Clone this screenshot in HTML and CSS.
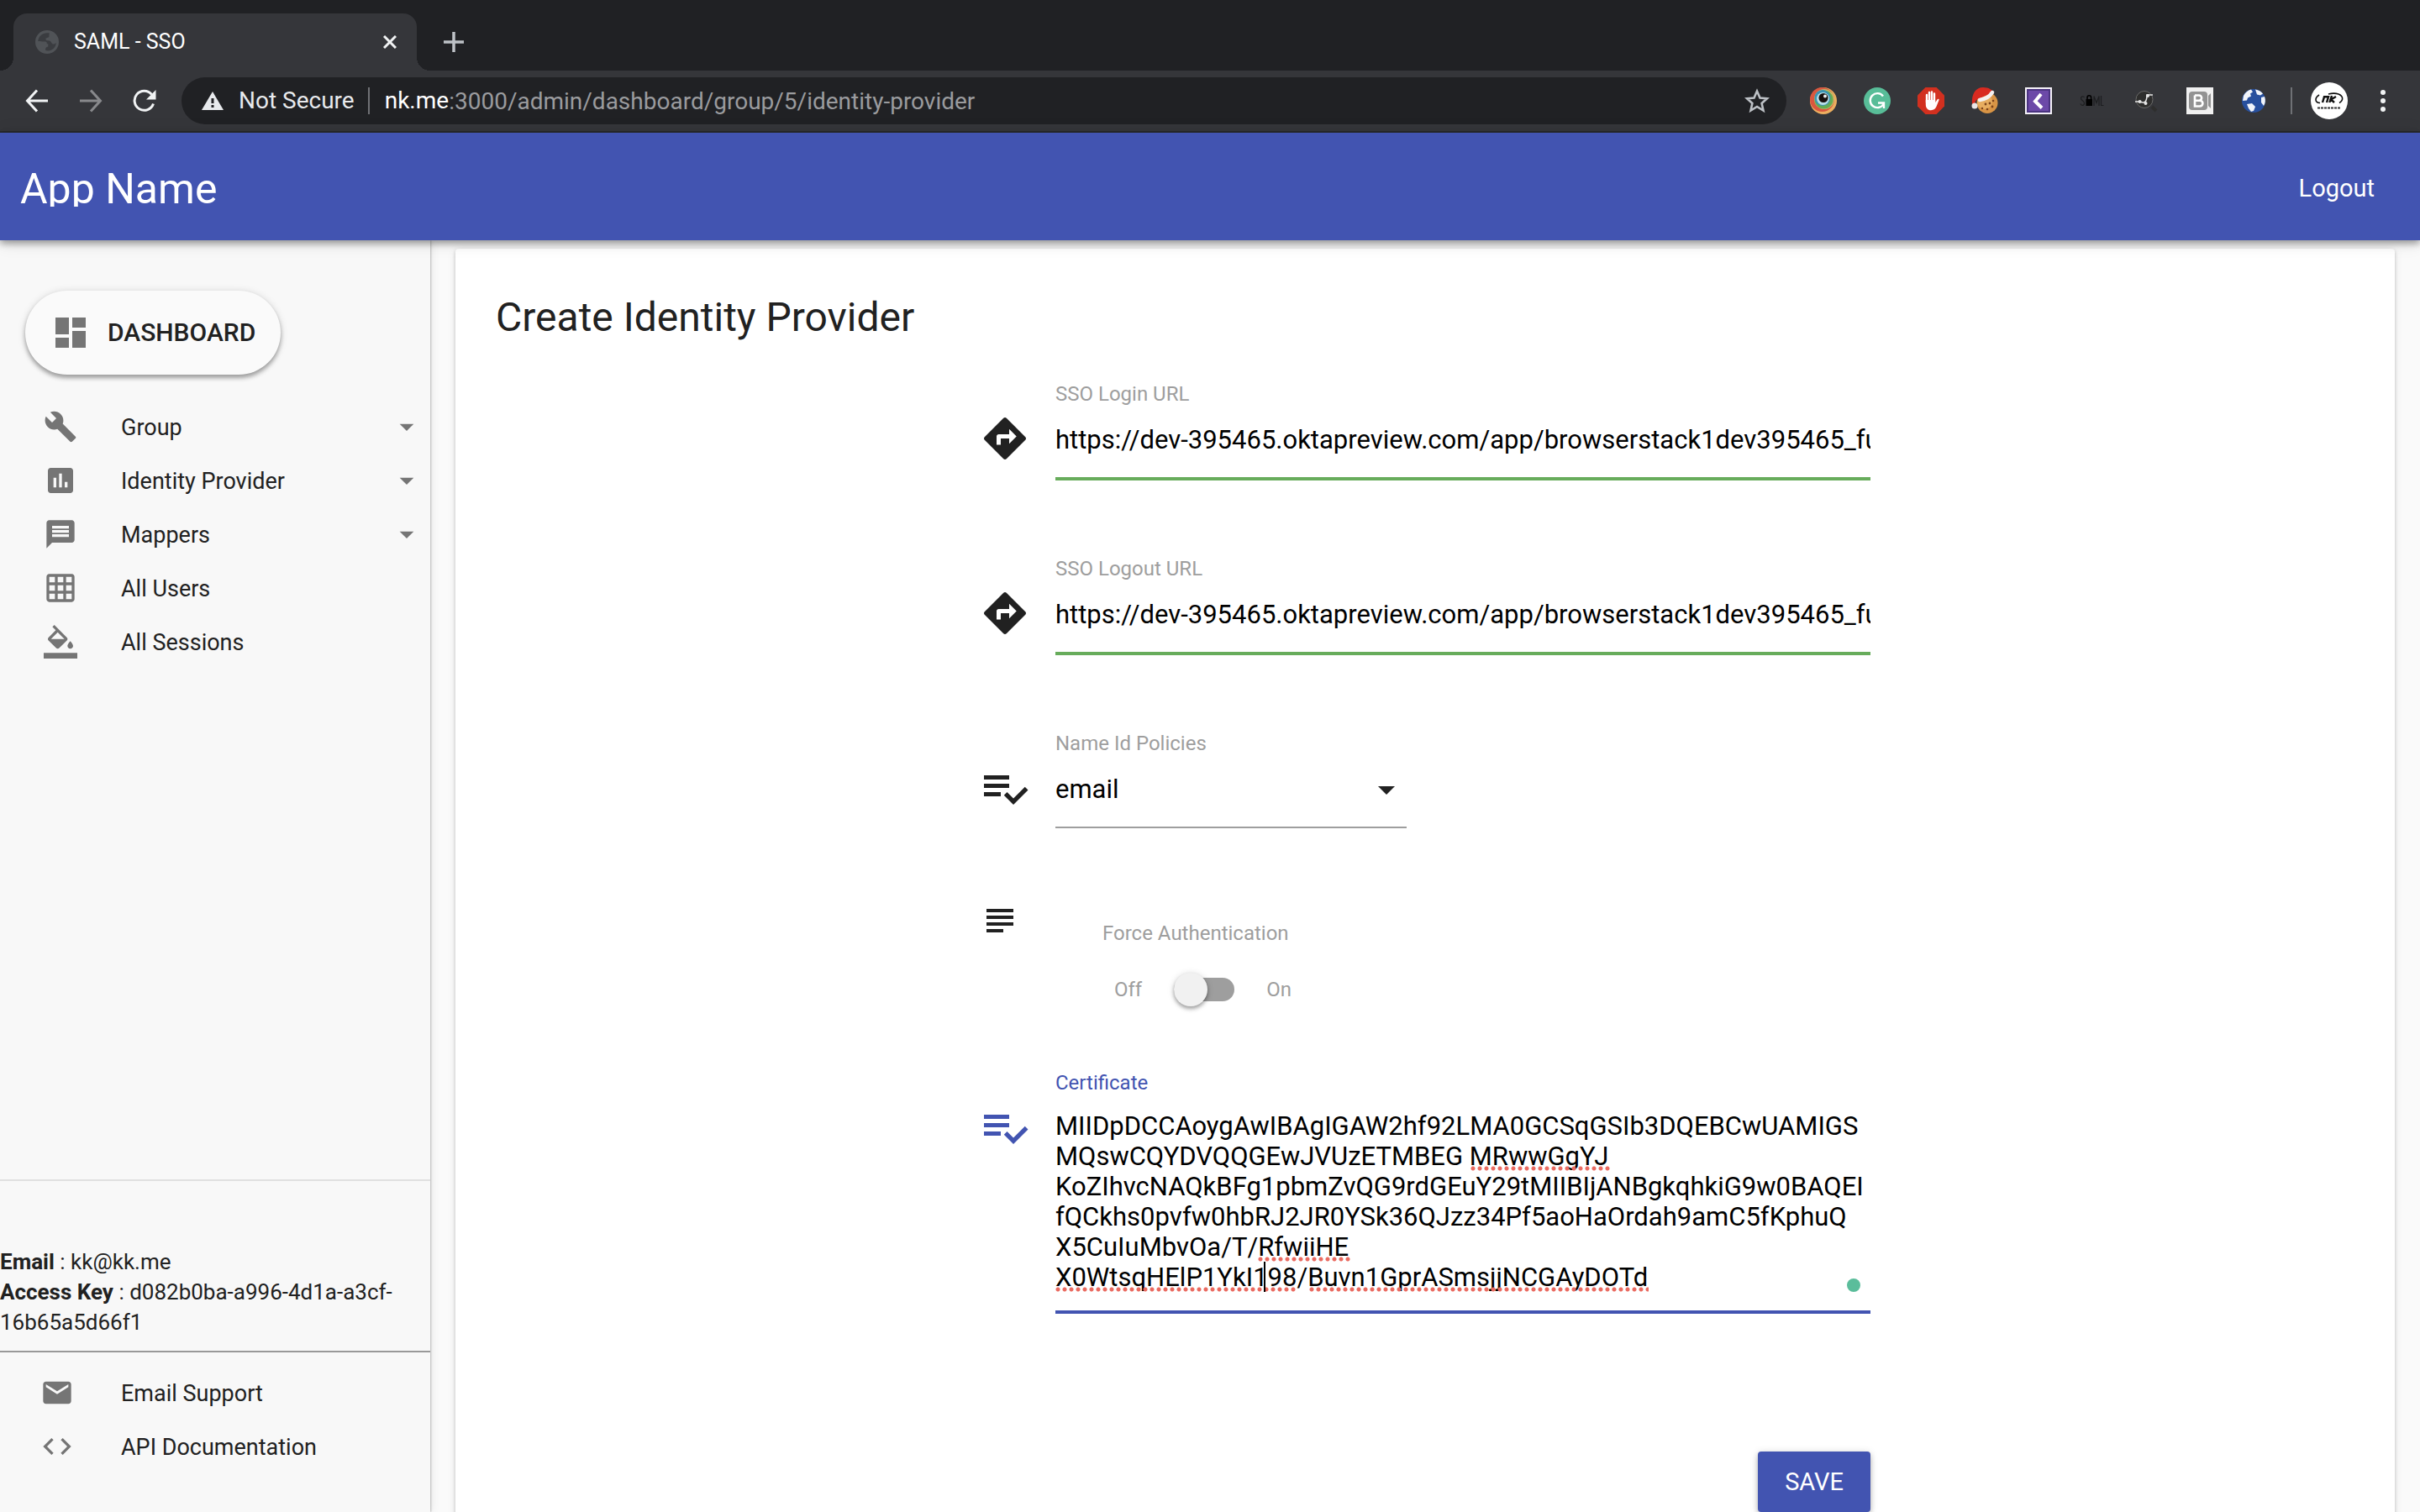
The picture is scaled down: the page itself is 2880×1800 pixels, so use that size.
FILE: index.html
```html
<!DOCTYPE html>
<html lang="en">
<head>
<meta charset="utf-8">
<meta name="viewport" content="width=device-width, initial-scale=1">
<title>SAML - SSO</title>
<link rel="stylesheet" href="styles.css">
</head>
<body>

<div class="chrome">
  <div class="tab-strip">
    <div class="tab">
      <svg class="favicon" viewBox="0 0 28 28" aria-hidden="true">
        <circle cx="14" cy="14" r="14" fill="#505357"/>
        <path d="M17 3.500C10 2 4 6 3.200 13c2 .6 5 .2 8.600.5 2 .2 2 1.500 2 2.800h1.500v3.200c-2 .6-3.600 1.400-3 4.500 5 1.500 9.500-1 11.700-5.500.4-1 .7-2.200.8-3.500-1.300 1.300-2.600 1.800-4 1.400-1.800-.6-1.800-3.400-3.800-3.900-2-.4-4.500.1-4.600-2-.1-2 3.400-1 4-2.700.3-1-.4-3 .6-4.300z" fill="#3a3c40"/>
      </svg>
      <span class="tab-title">SAML - SSO</span>
      <button class="bare tab-close" type="button" aria-label="Close tab">
        <svg width="16" height="16" viewBox="0 0 16 16"><path d="M1 1l14 14M15 1L1 15" stroke="#f1f3f4" stroke-width="3"/></svg>
      </button>
    </div>
    <button class="bare tab-new" type="button" aria-label="New tab">
      <svg width="24" height="24" viewBox="0 0 24 24"><path d="M12 0v24M0 12h24" stroke="#bdc1c6" stroke-width="3.500"/></svg>
    </button>
  </div>

  <div class="toolbar">
    <button class="bare tool" type="button" aria-label="Back">
      <svg width="28" height="28" viewBox="0 0 28 28"><path d="M14 1.500L2.500 14 14 26.500M2.500 14H27" fill="none" stroke="#f1f3f4" stroke-width="3"/></svg>
    </button>
    <button class="bare tool" type="button" aria-label="Forward">
      <svg width="28" height="28" viewBox="0 0 28 28"><path d="M14 1.500L25.500 14 14 26.500M25.500 14H1" fill="none" stroke="#88898c" stroke-width="3"/></svg>
    </button>
    <button class="bare tool" type="button" aria-label="Reload">
      <svg width="28" height="28" viewBox="0 0 28 28"><path d="M24.500 17.500A11.500 11.500 0 1 1 22.500 6.500" fill="none" stroke="#f1f3f4" stroke-width="3"/><path d="M27.500 1v11.500H16z" fill="#f1f3f4"/></svg>
    </button>

    <div class="omnibox">
      <svg width="26" height="22" viewBox="0 0 26 22" aria-hidden="true"><path d="M13 0l13 22H0z" fill="#e8eaed"/><path d="M13 8v6M13 16v3" stroke="#202124" stroke-width="3"/></svg>
      <span class="security">Not Secure</span>
      <span class="omnibox-rule"></span>
      <span class="host">nk.me</span>
      <input class="address" type="text" aria-label="Address" value=":3000/admin/dashboard/group/5/identity-provider">
      <button class="bare star" type="button" aria-label="Bookmark">
        <svg width="30" height="30" viewBox="0 0 30 30"><path d="M15 3.500l3.500 8 8.500.8-6.400 5.700 1.900 8.500L15 22l-7.500 4.500 1.900-8.500L3 12.300l8.500-.8z" fill="none" stroke="#bdc1c6" stroke-width="2.600"/></svg>
      </button>
    </div>

    <button class="bare tool" type="button" aria-label="Viewer">
      <svg width="32" height="32" viewBox="0 0 32 32"><circle cx="16" cy="16" r="16" fill="#ecae5f"/><circle cx="14.500" cy="14.500" r="14.500" fill="#d9573f"/><circle cx="17" cy="14" r="12" fill="#c9b565"/><circle cx="16.500" cy="14.500" r="11" fill="#64ab54"/><circle cx="15" cy="12.500" r="9.500" fill="#3a93b4"/><circle cx="15.500" cy="13.500" r="7.500" fill="#b8dde6"/><circle cx="16" cy="12.500" r="5.500" fill="#160f0e"/><circle cx="18" cy="10.500" r="2" fill="#eee"/></svg>
    </button>
    <button class="bare tool" type="button" aria-label="Grammar">
      <svg width="32" height="32" viewBox="0 0 32 32"><circle cx="16" cy="16" r="16" fill="#58bd98"/><path d="M23 10.500A8.500 8.500 0 1 0 23.500 20M17 18.500h7V25" fill="none" stroke="#fff" stroke-width="2.400"/></svg>
    </button>
    <button class="bare tool" type="button" aria-label="Blocker">
      <svg width="32" height="32" viewBox="0 0 32 32"><path d="M9.400 0h13.200L32 9.400v13.200L22.600 32H9.400L0 22.600V9.400z" fill="#d2301f"/><path d="M11 18V9M14 17V6M17 17V5.500M20 18V7.500" stroke="#fff" stroke-width="2.400" stroke-linecap="round"/><path d="M9.800 15h11.400v3l2.300-3.500c1-1.300 2.500-.5 2 .8l-3 7.500c-1 2.800-3.200 4.400-6.500 4.400-4 0-6.200-2.700-6.200-7z" fill="#fff"/></svg>
    </button>
    <button class="bare tool" type="button" aria-label="Cookies">
      <svg width="32" height="32" viewBox="0 0 32 32"><circle cx="19" cy="18.500" r="12.500" fill="#d89445"/><circle cx="16" cy="17" r="9" fill="#e7ad60"/><g fill="#7c431b"><circle cx="17" cy="20" r="1.400"/><circle cx="22" cy="19" r="1.400"/><circle cx="26" cy="16" r="1.300"/><circle cx="19" cy="26" r="1.300"/><circle cx="25" cy="23" r="1.400"/><circle cx="13" cy="25" r="1.200"/></g><path d="M1 20C0 8 5 0 14 0c7 0 11 3 12 6L8 14c-3 1-4 4-4 7z" fill="#d92a20"/><path d="M10 15c6-1 12-4 15-9" fill="none" stroke="#f4f1f0" stroke-width="4.500" stroke-linecap="round"/><circle cx="4" cy="22" r="3.500" fill="#e9e7e7"/></svg>
    </button>
    <button class="bare tool" type="button" aria-label="Previous">
      <svg width="32" height="32" viewBox="0 0 32 32"><path d="M0 0h32v32H0z" fill="#f4f1f8"/><path d="M2 2h28v28H2z" fill="#4a3380"/><path d="M4 4h24v24H4z" fill="#6c49a8"/><path d="M19 8l-7 8.500 8 8" fill="none" stroke="#fff" stroke-width="4"/></svg>
    </button>
    <button class="bare tool" type="button" aria-label="SAML tracer">
      <svg width="32" height="32" viewBox="0 0 32 32"><g fill="none" stroke="#1d1e20" stroke-width="1.200"><path d="M6.500 12c-1-2-4-1.500-4 1 0 3 4 2.500 4 6 0 3-4 3-4.500.5M18 22V10.500l3 8 3-8V22M26.500 10v11.500h3"/></g><path d="M8.500 14h7.500v8H8.500z" fill="#000"/><path d="M10 14v-2a2.300 2.300 0 0 1 4.600 0v2" fill="none" stroke="#000" stroke-width="1.600"/></svg>
    </button>
    <button class="bare tool" type="button" aria-label="Signal">
      <svg width="32" height="32" viewBox="0 0 32 32"><circle cx="14" cy="14.500" r="10" fill="#2e2e2d" stroke="#6a6a69" stroke-width="1"/><path d="M23 23l5 5" stroke="#2e2e2d" stroke-width="4"/><path d="M3 17h6q8 4 8-8h7" fill="none" stroke="#e4e4e4" stroke-width="1.600"/><g fill="#e4e4e4"><circle cx="8.500" cy="17" r="2"/><circle cx="15.500" cy="19" r="2"/><circle cx="18" cy="10" r="2"/></g></svg>
    </button>
    <button class="bare tool" type="button" aria-label="Recorder">
      <svg width="32" height="32" viewBox="0 0 32 32"><path d="M0 0h32v32H0z" fill="#f0f0f0"/><rect x="3" y="5" width="22" height="22" rx="4" fill="#929292"/><path d="M26 10l3-3v18l-3-3z" fill="#929292"/><path d="M10 9.500v13h6a3.400 3.400 0 0 0 0-6.800h-6M15 15.700a3.100 3.100 0 0 0 0-6.200h-5" fill="none" stroke="#fff" stroke-width="2.600"/></svg>
    </button>
    <button class="bare tool" type="button" aria-label="Globe">
      <svg width="32" height="32" viewBox="0 0 32 32"><circle cx="16" cy="16" r="14" fill="#28509e"/><path d="M4 10c2-4 5-6.500 9-7.500l2 3-3 2 1 3-4 2-1 3-5 .5zM18 2.500c4 .5 7 2.500 9 5l-3 2-4-1zM25 12l4-1c1.500 4 1 8-1 11l-3-4zM8 20l6-1 4 4-2 5-3 1-3-4z" fill="#f2f5fa"/></svg>
    </button>
    <span class="toolbar-rule"></span>
    <button class="bare avatar" type="button" aria-label="Profile">
      <svg width="44" height="44" viewBox="0 0 44 44"><circle cx="22" cy="22" r="22" fill="#fff"/><path d="M10 15c-5 3-6 9 1 9.500M34 24.500c5-3 5-8-1-10.500-3-1-8-1-12 0" fill="none" stroke="#111" stroke-width="1.600"/><path d="M14 24l2-6.700h5L19 24M25 16l-2.600 8M30 17l-6 3.500 4 3.500" fill="none" stroke="#111" stroke-width="2.400"/><path d="M8 30.500h28" stroke="#333" stroke-width="2" stroke-dasharray="3 1"/></svg>
    </button>
    <button class="bare tool menu" type="button" aria-label="Menu">
      <svg width="6" height="26" viewBox="0 0 6 26" fill="#f1f3f4"><circle cx="3" cy="3" r="3"/><circle cx="3" cy="13" r="3"/><circle cx="3" cy="23" r="3"/></svg>
    </button>
  </div>
</div>

<header class="app-bar">
  <span class="brand">App Name</span>
  <a class="logout" href="#logout">Logout</a>
</header>

<div class="workspace">
  <aside class="sidebar">
    <a class="dashboard" href="#dashboard">
      <svg width="48" height="48" viewBox="0 0 24 24" aria-hidden="true"><path d="M3 13h8V3H3v10zm0 8h8v-6H3v6zm10 0h8V11h-8v10zm0-18v6h8V3h-8z"/></svg>
      DASHBOARD
    </a>
    <nav class="nav">
      <a class="nav-item" href="#group">
        <svg width="40" height="40" viewBox="0 0 24 24" aria-hidden="true"><path d="M22.700 19l-9.100-9.100c.9-2.300.4-5-1.500-6.900-2-2-5-2.400-7.400-1.300L9 6 6 9 1.600 4.700C.4 7.100.9 10.100 2.900 12.100c1.900 1.900 4.600 2.400 6.900 1.500l9.100 9.100c.4.4 1 .4 1.400 0l2.300-2.300c.5-.4.5-1.100.1-1.400z"/></svg>
        <span>Group</span>
        <svg width="40" height="40" viewBox="0 0 24 24" aria-hidden="true"><path d="M7 10l5 5 5-5z"/></svg>
      </a>
      <a class="nav-item" href="#identity-provider">
        <svg width="40" height="40" viewBox="0 0 24 24" aria-hidden="true"><path d="M19 3H5c-1.100 0-2 .9-2 2v14c0 1.100.9 2 2 2h14c1.100 0 2-.9 2-2V5c0-1.100-.9-2-2-2zM9 17H7v-7h2v7zm4 0h-2V7h2v10zm4 0h-2v-4h2v4z"/></svg>
        <span>Identity Provider</span>
        <svg width="40" height="40" viewBox="0 0 24 24" aria-hidden="true"><path d="M7 10l5 5 5-5z"/></svg>
      </a>
      <a class="nav-item" href="#mappers">
        <svg width="40" height="40" viewBox="0 0 24 24" aria-hidden="true"><path d="M20 2H4c-1.100 0-1.990.9-1.990 2L2 22l4-4h14c1.100 0 2-.9 2-2V4c0-1.100-.9-2-2-2zM6 9h12v2H6V9zm12 5H6v-2h12v2zm0-6H6V6h12v2z"/></svg>
        <span>Mappers</span>
        <svg width="40" height="40" viewBox="0 0 24 24" aria-hidden="true"><path d="M7 10l5 5 5-5z"/></svg>
      </a>
      <a class="nav-item" href="#users">
        <svg width="40" height="40" viewBox="0 0 24 24" aria-hidden="true"><path d="M20 2H4c-1.100 0-2 .9-2 2v16c0 1.100.9 2 2 2h16c1.100 0 2-.9 2-2V4c0-1.100-.9-2-2-2zM8 20H4v-4h4v4zm0-6H4v-4h4v4zm0-6H4V4h4v4zm6 12h-4v-4h4v4zm0-6h-4v-4h4v4zm0-6h-4V4h4v4zm6 12h-4v-4h4v4zm0-6h-4v-4h4v4zm0-6h-4V4h4v4z"/></svg>
        <span>All Users</span>
      </a>
      <a class="nav-item" href="#sessions">
        <svg width="40" height="40" viewBox="0 0 24 24" aria-hidden="true"><path d="M16.560 8.940L7.620 0 6.210 1.410l2.380 2.380-5.150 5.150c-.59.59-.59 1.540 0 2.120l5.500 5.500c.29.29.68.44 1.060.44s.77-.15 1.060-.44l5.500-5.500c.59-.58.59-1.530 0-2.120zM5.210 10L10 5.210 14.790 10H5.210zM19 11.500s-2 2.170-2 3.500c0 1.100.9 2 2 2s2-.9 2-2c0-1.330-2-3.500-2-3.500zM0 20h24v4H0z"/></svg>
        <span>All Sessions</span>
      </a>
    </nav>

    <div class="account">
      <p><strong>Email</strong> : kk@kk.me</p>
      <p><strong>Access Key</strong> : d082b0ba-a996-4d1a-a3cf-16b65a5d66f1</p>
    </div>
    <nav class="support">
      <a class="nav-item" href="#support">
        <svg width="40" height="40" viewBox="0 0 24 24" aria-hidden="true"><path d="M20 4H4c-1.100 0-1.990.9-1.990 2L2 18c0 1.100.9 2 2 2h16c1.100 0 2-.9 2-2V6c0-1.100-.9-2-2-2zm0 4l-8 5-8-5V6l8 5 8-5v2z"/></svg>
        <span>Email Support</span>
      </a>
      <a class="nav-item" href="#api">
        <svg width="40" height="40" viewBox="0 0 24 24" aria-hidden="true"><path d="M9.400 16.600L4.800 12l4.600-4.600L8 6l-6 6 6 6 1.400-1.400zm5.200 0l4.600-4.600-4.600-4.600L16 6l6 6-6 6-1.400-1.400z"/></svg>
        <span>API Documentation</span>
      </a>
    </nav>
  </aside>

  <main class="content">
    <section class="card">
      <h1>Create Identity Provider</h1>
      <form class="form">
        <div class="field">
          <svg class="field-icon" viewBox="0 0 24 24" aria-hidden="true"><path d="M21.710 11.290l-9-9c-.39-.39-1.020-.39-1.410 0l-9 9c-.39.39-.39 1.020 0 1.410l9 9c.39.39 1.020.39 1.410 0l9-9c.39-.38.39-1.010 0-1.410zM14 14.500V12h-4v3H8v-4c0-.55.45-1 1-1h5V7.500l3.500 3.500-3.500 3.500z"/></svg>
          <div class="field-body">
            <label for="login-url">SSO Login URL</label>
            <input class="text-input" id="login-url" type="text" value="https://dev-395465.oktapreview.com/app/browserstack1dev395465_fu">
          </div>
        </div>

        <div class="field">
          <svg class="field-icon" viewBox="0 0 24 24" aria-hidden="true"><path d="M21.710 11.290l-9-9c-.39-.39-1.020-.39-1.410 0l-9 9c-.39.39-.39 1.020 0 1.410l9 9c.39.39 1.020.39 1.410 0l9-9c.39-.38.39-1.010 0-1.410zM14 14.500V12h-4v3H8v-4c0-.55.45-1 1-1h5V7.500l3.500 3.500-3.500 3.500z"/></svg>
          <div class="field-body">
            <label for="logout-url">SSO Logout URL</label>
            <input class="text-input" id="logout-url" type="text" value="https://dev-395465.oktapreview.com/app/browserstack1dev395465_fu">
          </div>
        </div>

        <div class="field">
          <svg class="field-icon" viewBox="0 0 24 24" aria-hidden="true"><path d="M14 10H2v2h12v-2zm0-4H2v2h12V6zM2 16h8v-2H2v2zm19.500-4.500L23 13l-6.990 7-4.510-4.500L13 14l3.010 3 5.490-5.500z"/></svg>
          <div class="field-body">
            <label for="policy">Name Id Policies</label>
            <div class="select-wrap">
              <select class="select" id="policy"><option>email</option></select>
              <svg class="select-arrow" width="20" height="10" viewBox="0 0 20 10" aria-hidden="true"><path d="M0 0h20L10 10z"/></svg>
            </div>
          </div>
        </div>

        <div class="field field-toggle">
          <svg class="toggle-icon" viewBox="0 0 24 24" aria-hidden="true"><path d="M14 17H4v2h10v-2zm6-8H4v2h16V9zM4 15h16v-2H4v2zM4 5v2h16V5H4z"/></svg>
          <div class="toggle-body">
            <label for="force-auth">Force Authentication</label>
            <div class="toggle-row">
              <span>Off</span>
              <input class="toggle" id="force-auth" type="checkbox">
              <span>On</span>
            </div>
          </div>
        </div>

        <div class="field field-active">
          <svg class="field-icon" viewBox="0 0 24 24" aria-hidden="true"><path d="M14 10H2v2h12v-2zm0-4H2v2h12V6zM2 16h8v-2H2v2zm19.500-4.500L23 13l-6.990 7-4.510-4.500L13 14l3.010 3 5.490-5.500z"/></svg>
          <div class="field-body">
            <label for="certificate">Certificate</label>
            <div class="textarea-wrap">
              <textarea class="textarea" id="certificate" rows="6" spellcheck="false">MIIDpDCCAoygAwIBAgIGAW2hf92LMA0GCSqGSIb3DQEBCwUAMIGS
MQswCQYDVQQGEwJVUzETMBEG MRwwGgYJ
KoZIhvcNAQkBFg1pbmZvQG9rdGEuY29tMIIBIjANBgkqhkiG9w0BAQEI
fQCkhs0pvfw0hbRJ2JR0YSk36QJzz34Pf5aoHaOrdah9amC5fKphuQ
X5CuIuMbvOa/T/RfwiiHE
X0WtsqHElP1YkI198/Buvn1GprASmsjjNCGAyDOTd</textarea>
              <span class="misspelt misspelt-a"></span>
              <span class="misspelt misspelt-b"></span>
              <span class="misspelt misspelt-c"></span>
              <span class="misspelt misspelt-d"></span>
              <span class="caret"></span>
              <span class="checker-dot"></span>
            </div>
          </div>
        </div>

        <div class="actions"><button class="save" type="submit">SAVE</button></div>
      </form>
    </section>
  </main>
</div>

</body>
</html>
```
FILE: styles.css
```css
:root {
  --primary: #4254b1;
  --text: #212121;
  --icon: #757575;
  --muted: #9e9e9e;
  --valid: #67ac5b;
}

* { box-sizing: border-box; }

body {
  margin: 0;
  height: 100vh;
  display: flex;
  flex-direction: column;
  overflow: hidden;
  background: #fafafa;
  color: var(--text);
  font: 27px/36px Roboto, "Liberation Sans", sans-serif;
}

a { color: inherit; text-decoration: none; }
svg { display: block; flex: none; }
input, select, textarea, button { font-family: inherit; outline: 0; }

.bare {
  padding: 0;
  border: 0;
  background: none;
  display: flex;
  align-items: center;
  justify-content: center;
  flex: none;
}

/* Browser frame */
.chrome { flex: none; background: #202124; }

.tab-strip {
  height: 84px;
  padding: 16px 16px 0;
  display: flex;
  align-items: stretch;
}

.tab {
  position: relative;
  width: 480px;
  padding: 0 24px 0 26px;
  display: flex;
  align-items: center;
  border-radius: 16px 16px 0 0;
  background: #35363a;
}

/* Concave feet that join the tab to the toolbar */
.tab::before, .tab::after {
  content: "";
  position: absolute;
  bottom: 0;
  width: 16px;
  height: 16px;
}
.tab::before { left: -16px; background: radial-gradient(circle at 0 0, transparent 16px, #35363a 16px); }
.tab::after { right: -16px; background: radial-gradient(circle at 100% 0, transparent 16px, #35363a 16px); }

.favicon { width: 28px; height: 28px; }
.tab-title { flex: 1; margin-left: 18px; font-size: 25px; color: #fff; }
.tab-new { margin-left: 32px; }

.toolbar {
  height: 74px;
  padding: 0 12px;
  display: flex;
  align-items: center;
  background: #35363a;
  border-bottom: 2px solid #28292b;
}

.tool { width: 64px; height: 64px; }

.omnibox {
  flex: 1;
  height: 56px;
  margin: 0 12px;
  padding: 0 20px 0 24px;
  display: flex;
  align-items: center;
  border-radius: 28px;
  background: #202124;
  font-size: 28px;
}
.security { margin-left: 18px; color: #e8eaed; }
.omnibox-rule { width: 2px; height: 32px; margin: 0 18px 0 16px; background: #6f7175; }
.host { color: #fff; }
.address {
  flex: 1;
  padding: 0;
  border: 0;
  background: none;
  font-size: 28px;
  color: #9a9b9e;
}
.toolbar-rule { width: 2px; height: 32px; margin: 0 22px 0 12px; background: #6f7175; }
.menu { margin-left: 10px; }

/* App bar */
.app-bar {
  position: relative;
  z-index: 2;
  flex: none;
  height: 128px;
  padding: 0 54px 0 24px;
  display: flex;
  align-items: center;
  justify-content: space-between;
  background: var(--primary);
  color: #fff;
  box-shadow: 0 4px 8px rgba(0, 0, 0, .35), 0 2px 20px rgba(0, 0, 0, .12);
}
.brand { margin-top: 6px; font-size: 50px; line-height: 42px; overflow: hidden; }
.logout { padding-top: 4px; font-size: 29px; }

.workspace { flex: 1; min-height: 0; display: flex; }

/* Sidebar */
.sidebar {
  position: relative;
  z-index: 1;
  flex: none;
  width: 512px;
  padding: 60px 0 46px;
  display: flex;
  flex-direction: column;
  background: #f8f8f8;
  box-shadow: 1px 0 2px rgba(0, 0, 0, .22), 2px 0 10px rgba(0, 0, 0, .08);
}

.dashboard {
  align-self: flex-start;
  height: 100px;
  margin-left: 30px;
  padding: 0 30px;
  display: flex;
  align-items: center;
  gap: 20px;
  border-radius: 50px;
  background: #fafafa;
  font-size: 30px;
  font-weight: 500;
  box-shadow: 0 4px 5px rgba(0, 0, 0, .3), 0 1px 10px rgba(0, 0, 0, .15);
}
.sidebar svg { fill: var(--icon); }

.nav { padding-top: 30px; }
.nav-item {
  height: 64px;
  padding: 0 8px 0 52px;
  display: flex;
  align-items: center;
  gap: 52px;
}
.nav-item span { flex: 1; padding-top: 2px; white-space: nowrap; }

.account {
  margin-top: auto;
  padding: 78px 0 16px;
  border-top: 2px solid #e0e0e0;
  border-bottom: 2px solid #999;
  font-size: 26px;
}
.account p { margin: 0; }
.account strong { font-weight: 700; }

.support { padding-top: 16px; }
.support .nav-item { padding-left: 48px; gap: 56px; }

/* Main card */
.content {
  flex: 1;
  min-width: 0;
  padding: 10px 30px 0;
  overflow-y: auto;
  scrollbar-width: none;
}
.card {
  padding: 52px 48px 60px;
  border-radius: 4px;
  background: #fff;
  box-shadow: 0 2px 4px rgba(0, 0, 0, .2), 0 2px 12px rgba(0, 0, 0, .08);
}
h1 { margin: 0 0 46px; font-size: 48px; line-height: 60px; font-weight: 400; }

.form { max-width: 1060px; margin: 0 auto; }
.field { display: flex; gap: 30px; margin-bottom: 90px; }
.field-icon { width: 60px; height: 60px; margin-top: 38px; fill: var(--text); }
.field-body { flex: 1; min-width: 0; }
.field label, .toggle-row { display: block; font-size: 24px; line-height: 30px; color: var(--muted); }

.text-input, .select, .textarea {
  display: block;
  width: 100%;
  padding: 0 0 6px;
  border: 0;
  border-radius: 0;
  background: none;
  font-size: 31px;
  color: #000;
}
.text-input { height: 88px; border-bottom: 4px solid var(--valid); }

.select-wrap { position: relative; width: 418px; }
.select { height: 86px; border-bottom: 2px solid var(--muted); appearance: none; }
.select-arrow { position: absolute; right: 14px; top: 36px; fill: var(--text); pointer-events: none; }

.field-toggle { gap: 98px; margin: -4px 0 76px; }
.toggle-icon { width: 48px; height: 48px; fill: var(--text); }
.toggle-body { padding-top: 24px; }
.field .toggle-row {
  display: flex;
  align-items: center;
  gap: 38px;
  margin-top: 32px;
  padding-left: 14px;
}
.toggle {
  appearance: none;
  display: flex;
  width: 72px;
  height: 28px;
  margin: 6px 0;
  border-radius: 14px;
  background: var(--muted);
}
.toggle::before {
  content: "";
  width: 40px;
  height: 40px;
  margin: -6px 0;
  flex: none;
  border-radius: 50%;
  background: #f1f1f1;
  box-shadow: 0 3px 4px rgba(0, 0, 0, .3), 0 1px 8px rgba(0, 0, 0, .15);
}

.field-active { margin-bottom: 164px; }
.field-active .field-icon { fill: var(--primary); }
.field-active label { color: var(--primary); }
.textarea-wrap { position: relative; }
.textarea {
  height: 260px;
  padding: 19px 0 21px;
  border-bottom: 4px solid var(--primary);
  line-height: 36px;
  white-space: pre;
  overflow: hidden;
  resize: none;
}

/* Spelling marks, caret and checker badge lie over the text area */
.misspelt {
  position: absolute;
  height: 6px;
  background: radial-gradient(circle at 3px 3px, #ea6a60 2px, transparent 3px) 0 0 / 8px 6px repeat-x;
}
.misspelt-a { left: 494px; top: 84px; width: 166px; }
.misspelt-b { left: 241px; top: 192px; width: 110px; }
.misspelt-c { left: 0; top: 228px; width: 286px; }
.misspelt-d { left: 302px; top: 228px; width: 404px; }
.caret { position: absolute; left: 248px; top: 198px; width: 2px; height: 36px; background: #000; }
.checker-dot {
  position: absolute;
  right: 12px;
  top: 218px;
  width: 16px;
  height: 16px;
  border-radius: 50%;
  background: #5bbd9b;
}

.actions { display: flex; justify-content: flex-end; }
.save {
  height: 72px;
  padding: 0 32px;
  border: 0;
  border-radius: 4px;
  background: var(--primary);
  color: #fff;
  font-size: 29px;
  box-shadow: 0 4px 6px rgba(0, 0, 0, .2), 0 1px 10px rgba(0, 0, 0, .15);
}
```
